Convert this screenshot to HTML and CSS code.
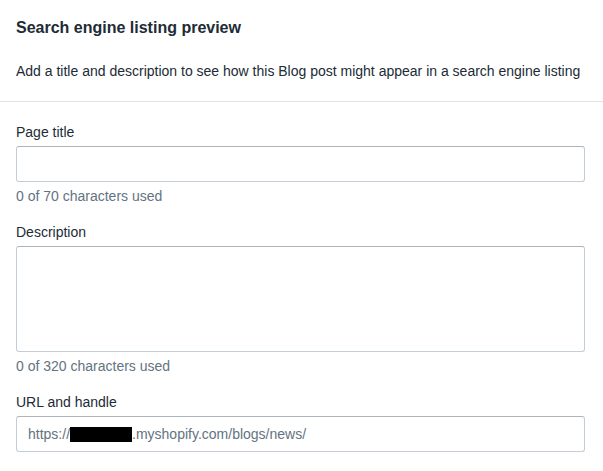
FILE: index.html
```html
<!DOCTYPE html>
<html>
<head>
<meta charset="utf-8">
<link rel="stylesheet" href="styles.css">
</head>
<body>
<div class="card">
  <div class="head">
    <h2 class="title">Search engine listing preview</h2>
    <p class="desc">Add a title and description to see how this Blog post might appear in a search engine listing</p>
  </div>
  <div class="body">
    <div class="field">
      <label class="label">Page title</label>
      <div class="input"></div>
      <div class="help">0 of 70 characters used</div>
    </div>
    <div class="field">
      <label class="label">Description</label>
      <div class="input textarea"></div>
      <div class="help">0 of 320 characters used</div>
    </div>
    <div class="field">
      <label class="label">URL and handle</label>
      <div class="input url"><span class="urltext">https://<span class="redact"></span>.myshopify.com/blogs/news/</span></div>
    </div>
  </div>
</div>
</body>
</html>
```
FILE: styles.css
```css
html, body {
  margin: 0;
  padding: 0;
  background: #ffffff;
}
body {
  font-family: "Liberation Sans", Arial, sans-serif;
  font-size: 14px;
  color: #212b36;
  width: 603px;
  height: 471px;
  overflow: hidden;
}
.card {
  display: flex;
  flex-direction: column;
}
.head {
  padding: 18px 16px 0 16px;
  border-bottom: 1px solid #dfe3e8;
  height: 102px;
  box-sizing: border-box;
}
.title {
  margin: 0;
  font-size: 16px;
  font-weight: 700;
  line-height: 20px;
  color: #212b36;
}
.desc {
  margin: 23px 0 0 0;
  font-size: 14px;
  line-height: 20px;
}
.body {
  padding: 20px 18px 0 16px;
  display: flex;
  flex-direction: column;
  gap: 16px;
}
.field {
  display: flex;
  flex-direction: column;
}
.label {
  line-height: 20px;
  margin-bottom: 4px;
}
.input {
  height: 36px;
  box-sizing: border-box;
  border: 1px solid #c4cdd5;
  border-top-color: #aeb4b9;
  border-radius: 3px;
  background: #fff;
}
.textarea {
  height: 106px;
}
.help {
  color: #637381;
  line-height: 20px;
  margin-top: 4px;
}
.url {
  display: flex;
  align-items: center;
  padding: 0 11px;
}
.urltext {
  color: #637381;
  display: flex;
  align-items: center;
}
.redact {
  display: inline-block;
  width: 62px;
  height: 15px;
  background: #000;
}
```
